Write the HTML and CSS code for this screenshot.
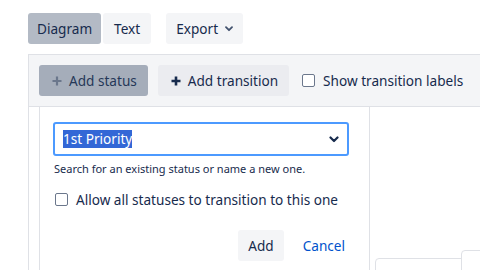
FILE: index.html
```html
<!DOCTYPE html>
<html lang="en">
<head>
  <meta charset="UTF-8" />
  <title>Workflow editor</title>
  <link rel="stylesheet" href="styles.css">
</head>
<body>

  <div class="tabs">
    <button class="btn btn-selected">Diagram</button>
    <button class="btn btn-tab">Text</button>
    <button class="btn btn-export">Export
      <svg width="8" height="6" viewBox="0 0 8 6"><path d="M1 1.2 L4 4.2 L7 1.2" fill="none" stroke="#42526e" stroke-width="1.8" stroke-linecap="round" stroke-linejoin="round"/></svg>
    </button>
  </div>

  <div class="toolbar">
    <button class="btn btn-active">
      <svg width="10" height="10" viewBox="0 0 10 10"><path d="M5 0.5v9M0.5 5h9" stroke="#6b778c" stroke-width="2.2" /></svg>
      Add status
    </button>
    <button class="btn btn-plain">
      <svg width="10" height="10" viewBox="0 0 10 10"><path d="M5 0.5v9M0.5 5h9" stroke="#172b4d" stroke-width="2.6" /></svg>
      Add transition
    </button>
    <label class="check">
      <span class="box"></span>
      Show transition labels
    </label>
  </div>

  <div class="canvas">
    <div class="popup">
      <div class="select">
        <span class="chosen">1st Priority</span>
        <svg width="10" height="7" viewBox="0 0 10 7"><path d="M1.5 1.5 L5 5 L8.5 1.5" fill="none" stroke="#172b4d" stroke-width="2.2" stroke-linecap="round" stroke-linejoin="round"/></svg>
      </div>
      <p class="help">Search for an existing status or name a new one.</p>
      <label class="check check-row">
        <span class="box"></span>
        Allow all statuses to transition to this one
      </label>
      <div class="actions">
        <button class="btn btn-add">Add</button>
        <a class="link" href="#">Cancel</a>
      </div>
    </div>
    <div class="node node-a"></div>
    <div class="node node-b"></div>
  </div>

</body>
</html>
```

FILE: styles.css
```css
body {
  font-family: "Noto Sans", sans-serif;
  font-size: 13.6px;
  color: #172b4d;
  margin: 0;
  padding: 13px 0 0 28px;
  background-color: #ffffff;
  height: 257px;
  overflow: hidden;
}
.tabs {
  display: flex;
  gap: 2px;
  height: 31px;
}
.btn {
  font-family: inherit;
  font-size: 13.6px;
  color: #172b4d;
  background-color: #f4f5f7;
  border: none;
  border-radius: 3px;
  height: 31px;
  padding: 0 9px;
  display: flex;
  align-items: center;
  gap: 7px;
  white-space: nowrap;
  flex-shrink: 0;
}
.btn-selected {
  background-color: #b3bac5;
}
.btn-tab {
  padding: 0 11px;
}
.btn-export {
  margin-left: 13px;
  padding: 0 10px;
}
.btn-add {
  padding: 0 10px;
}
.toolbar {
  margin-top: 10px;
  border-top: 1px solid #dfe1e6;
  border-left: 1px solid #dfe1e6;
  border-bottom: 1px solid #dfe1e6;
  background-color: #f4f5f7;
  height: 53px;
  box-sizing: border-box;
  padding: 0 10px;
  display: flex;
  align-items: center;
  gap: 10px;
  white-space: nowrap;
}
.btn-active {
  background-color: #a5adba;
  color: #253858;
  padding: 0 11px 0 13px;
}
.btn-plain {
  background-color: #ebecf0;
  padding: 0 11px 0 13px;
}
.check {
  display: flex;
  align-items: center;
  gap: 8px;
  margin-left: 3px;
  white-space: nowrap;
}
.box {
  width: 11px;
  height: 11px;
  border: 1px solid #6b778c;
  border-radius: 2px;
  background-color: #fff;
  flex-shrink: 0;
}
.canvas {
  position: relative;
  border-left: 1px solid #dfe1e6;
  height: 163px;
  overflow: hidden;
}
.popup {
  margin-left: 10px;
  width: 331px;
  box-sizing: border-box;
  border-left: 1px solid #dfe1e6;
  border-right: 1px solid #dfe1e6;
  background-color: #fff;
  height: 100%;
  padding: 15px 20px 0 13px;
}
.select {
  height: 34px;
  box-sizing: border-box;
  border: 2px solid #4c9aff;
  border-radius: 3px;
  display: flex;
  align-items: center;
  justify-content: space-between;
  padding: 0 8px 0 8px;
}
.chosen {
  background-color: #3367d6;
  color: #fff;
  line-height: 18px;
}
.help {
  font-size: 11px;
  margin: 5px 0 0 1px;
}
.check-row {
  margin: 14px 0 0 2px;
}
.actions {
  display: flex;
  justify-content: flex-end;
  align-items: center;
  gap: 19px;
  margin-top: 21px;
  padding-right: 4px;
}
.link {
  color: #0052cc;
  text-decoration: none;
}
.node {
  position: absolute;
  border: 1px solid #dfe1e6;
  border-radius: 4px;
  height: 40px;
  background-color: #fff;
}
.node-a {
  left: 346px;
  top: 151px;
  width: 90px;
}
.node-b {
  left: 432px;
  top: 143px;
  width: 60px;
}
```
